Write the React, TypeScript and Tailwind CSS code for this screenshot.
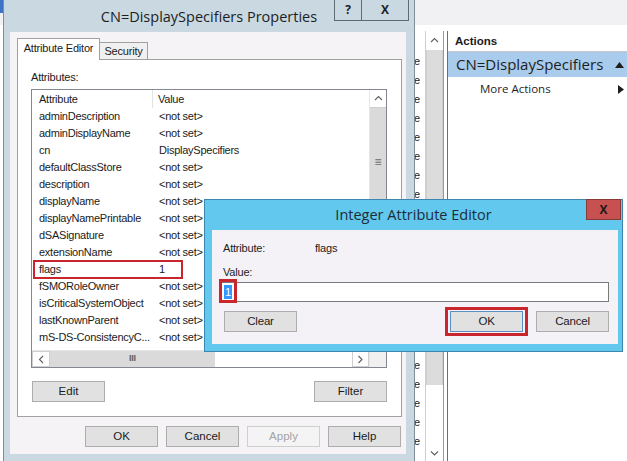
import React from "react";

type Row = [string, string];

const ROWS: Row[] = [
  ["adminDescription", "<not set>"],
  ["adminDisplayName", "<not set>"],
  ["cn", "DisplaySpecifiers"],
  ["defaultClassStore", "<not set>"],
  ["description", "<not set>"],
  ["displayName", "<not set>"],
  ["displayNamePrintable", "<not set>"],
  ["dSASignature", "<not set>"],
  ["extensionName", "<not set>"],
  ["flags", "1"],
  ["fSMORoleOwner", "<not set>"],
  ["isCriticalSystemObject", "<not set>"],
  ["lastKnownParent", "<not set>"],
  ["mS-DS-ConsistencyC...", "<not set>"],
];

// rows of the console list behind the dialogs; the ones under the editor are hidden
const CONSOLE_ROWS = Array.from({ length: 21 }, (_, i) => (i >= 8 && i <= 15 ? "" : "e"));

function Chevron({ dir }: { dir: "up" | "down" | "left" | "right" }) {
  const d = {
    up: "M1 5 L4.5 1.5 L8 5",
    down: "M1 1.5 L4.5 5 L8 1.5",
    left: "M5 1 L1.5 4.5 L5 8",
    right: "M1.5 1 L5 4.5 L1.5 8",
  }[dir];
  const vertical = dir === "up" || dir === "down";
  return (
    <svg width={vertical ? 9 : 7} height={vertical ? 7 : 9} viewBox={vertical ? "0 0 9 7" : "0 0 7 9"}>
      <path d={d} fill="none" stroke="#606060" strokeWidth="1.1" />
    </svg>
  );
}

function Btn({
  children,
  className = "",
  disabled = false,
  primary = false,
}: {
  children: React.ReactNode;
  className?: string;
  disabled?: boolean;
  primary?: boolean;
}) {
  const look = disabled
    ? "border-[#cfcfcf] bg-[#f4f4f4] text-[#a3a3a3]"
    : primary
      ? "border-[#5b8fc4] bg-[#e1e1e1] text-[#1b1b1b]"
      : "border-[#adadad] bg-[#e1e1e1] text-[#1b1b1b]";
  return (
    <div className={`flex h-[21px] w-[73px] shrink-0 items-center justify-center border text-[11.5px] ${look} ${className}`}>
      {children}
    </div>
  );
}

function Console() {
  return (
    <div className="flex h-full w-full flex-col">
      <div className="flex h-[25px] shrink-0 bg-[#f1f1f3]">
        <div className="h-[13px] w-[3px] bg-[#3d73c4]" />
      </div>
      <div className="h-[6px] shrink-0 bg-white" />
      <div className="flex min-h-0 flex-1">
        <div className="flex w-[444px] shrink-0 border-r border-[#9a9a9a]">
          <div className="flex w-[425px] flex-col overflow-hidden pt-[21px] text-[11px]">
            {CONSOLE_ROWS.map((t, i) => (
              <div key={i} className="h-[19px] shrink-0 whitespace-nowrap pl-[414px] leading-[19px]">
                {t}
              </div>
            ))}
          </div>
          <div className="flex w-[18px] flex-col border-l border-[#cfcfcf] bg-white">
            <div className="flex h-[19px] shrink-0 items-center justify-center">
              <Chevron dir="up" />
            </div>
            <div className="h-[335px] shrink-0 border-x border-[#cfcfcf] bg-[#dcdcdc]" />
            <div className="flex-1" />
            <div className="flex h-[14px] shrink-0 items-start justify-center pt-[3px]">
              <Chevron dir="down" />
            </div>
          </div>
        </div>
        <div className="w-[3px] shrink-0" />
        <div className="flex flex-1 flex-col border-l border-[#6f6f6f]">
          <div className="flex h-[21px] shrink-0 items-center border-b border-[#c8c8c8] pl-[7px] pt-[2px] text-[11.5px] font-bold text-[#1b1b1b]">
            Actions
          </div>
          <div className="flex h-[25px] shrink-0 items-center justify-between bg-[#a9cbec] pl-[8px] pr-[3px] font-['Open_Sans',sans-serif] text-[15px] text-[#1e1e1e]">
            <span>CN=DisplaySpecifiers</span>
            <svg width="9" height="6" viewBox="0 0 9 6">
              <path d="M0 6 L4.5 0 L9 6 Z" fill="#1e1e1e" />
            </svg>
          </div>
          <div className="flex h-[24px] shrink-0 items-center justify-between pl-[32px] pr-[3px] font-['Open_Sans',sans-serif] text-[11.5px] text-[#1e1e1e]">
            <span>More Actions</span>
            <svg width="6" height="9" viewBox="0 0 6 9">
              <path d="M0 0 L6 4.5 L0 9 Z" fill="#1e1e1e" />
            </svg>
          </div>
        </div>
      </div>
    </div>
  );
}

function AttributeList() {
  return (
    <div className="ml-[13px] mt-[5px] flex h-[279px] w-[356px] border border-[#828790] bg-white text-[11px] tracking-[-0.25px]">
      <div className="flex w-[337px] flex-col">
        <div className="flex h-[18px] shrink-0 items-center">
          <div className="flex h-full w-[121px] items-center border-r border-[#e3e3e3] pl-[7px]">Attribute</div>
          <div className="pl-[5px]">Value</div>
        </div>
        <div className="flex h-[242px] shrink-0 flex-col overflow-hidden">
          {ROWS.map(([name, value]) => (
            <div key={name} className="relative flex h-[17px] shrink-0 items-center whitespace-nowrap">
              <div className="w-[121px] shrink-0 pl-[7px]">{name}</div>
              <div className="pl-[6px]">{value}</div>
              {name === "flags" && (
                <div className="absolute left-[1px] top-[-1px] h-[19px] w-[150px] border-2 border-[#c8262c]" />
              )}
            </div>
          ))}
        </div>
        <div className="flex h-[17px] shrink-0 border-t border-[#e6e6e6]">
          <div className="flex w-[18px] items-center justify-center border border-[#cfcfcf] bg-white">
            <Chevron dir="left" />
          </div>
          <div className="flex w-[165px] items-center justify-center bg-[#dadada] text-[9px] font-bold text-[#606060]">
            III
          </div>
          <div className="flex-1 bg-white" />
          <div className="flex w-[17px] items-center justify-center border border-[#cfcfcf] bg-white">
            <Chevron dir="right" />
          </div>
        </div>
      </div>
      <div className="flex w-[17px] flex-col border-l border-[#e6e6e6]">
        <div className="flex h-[18px] shrink-0 items-center justify-center border-b border-[#cfcfcf]">
          <Chevron dir="up" />
        </div>
        <div className="flex h-[107px] shrink-0 items-center justify-center bg-[#dadada] text-[12px] text-[#6a6a6a]">
          ≡
        </div>
        <div className="flex-1 bg-[#f0f0f0]" />
      </div>
    </div>
  );
}

function PropertiesDialog() {
  return (
    <div className="absolute left-[3px] top-[-1px] flex h-[464px] w-[412px] flex-col border border-[#7f8e99] bg-[#c9d8e1]">
      <div className="relative flex h-[32px] shrink-0 items-center justify-center pt-[1px] font-['Open_Sans',sans-serif] text-[14.5px] text-[#1e1e1e]">
        CN=DisplaySpecifiers Properties
        <div className="absolute right-[5px] top-0 flex h-[21px] border border-t-0 border-[#5c6c78]">
          <div className="flex w-[27px] items-center justify-center border-r border-[#5c6c78] text-[12px] font-bold">?</div>
          <div className="flex w-[46px] items-center justify-center text-[12px] font-bold">X</div>
        </div>
      </div>
      <div className="ml-[6px] flex h-[422px] w-[396px] flex-col bg-[#f5f3f6]">
        <div className="ml-[7px] mt-[6px] flex h-[22px] items-end">
          <div className="relative z-10 flex h-[22px] w-[83px] items-center justify-center border border-b-0 border-[#a0a0a0] bg-white pb-[2px] text-[11px] tracking-[-0.2px]">
            Attribute Editor
          </div>
          <div className="mb-[1px] flex h-[17px] w-[48px] items-center justify-center border border-b-0 border-l-0 border-[#a0a0a0] bg-[#f0f0f0] text-[11px] tracking-[-0.2px]">
            Security
          </div>
        </div>
        <div className="-mt-[1px] ml-[7px] flex h-[358px] w-[385px] flex-col border border-[#a0a0a0] bg-white">
          <div className="pl-[13px] pt-[10px] text-[11px] leading-[14px] tracking-[-0.2px]">Attributes:</div>
          <AttributeList />
          <div className="mt-[13px] flex justify-between pl-[14px] pr-[14px]">
            <Btn>Edit</Btn>
            <Btn>Filter</Btn>
          </div>
        </div>
        <div className="mt-[9px] flex justify-end gap-[8px] pr-[5px]">
          <Btn>OK</Btn>
          <Btn>Cancel</Btn>
          <Btn disabled>Apply</Btn>
          <Btn>Help</Btn>
        </div>
      </div>
    </div>
  );
}

function IntegerEditor() {
  return (
    <div className="absolute left-[204px] top-[199px] flex h-[153px] w-[419px] flex-col border border-[#3d86ad] bg-[#62c8ee]">
      <div className="relative flex h-[30px] shrink-0 items-center justify-center font-['Open_Sans',sans-serif] text-[14.5px] text-[#1d2d38]">
        Integer Attribute Editor
        <div className="absolute right-[1px] top-[-1px] flex h-[21px] w-[35px] items-center justify-center border border-[#8a3a36] bg-[#c75050] text-[12px] font-bold text-[#1a1a1a]">
          X
        </div>
      </div>
      <div className="ml-[7px] flex h-[114px] w-[406px] flex-col bg-[#f4f2f6] text-[11px] tracking-[-0.2px]">
        <div className="flex pl-[11px] pt-[11px] leading-[14px]">
          <div className="w-[92px]">Attribute:</div>
          <div>flags</div>
        </div>
        <div className="mt-[10px] pl-[11px] leading-[14px]">Value:</div>
        <div className="relative ml-[9px] mt-[3px] flex h-[20px] w-[388px] items-center border border-[#7a7a7a] bg-white pl-[2px]">
          <span className="bg-[#3399ff] px-[1px] leading-[14px] text-white">1</span>
          <div className="absolute left-[-3px] top-[-4px] h-[24px] w-[18px] border-[3px] border-[#c8262c]" />
        </div>
        <div className="mt-[5px] flex items-center">
          <Btn className="ml-[12px]">Clear</Btn>
          <div className="ml-[148px] border-[3px] border-[#c8262c] px-[2px] py-[1px]">
            <Btn primary>OK</Btn>
          </div>
          <Btn className="ml-[8px]">Cancel</Btn>
        </div>
      </div>
    </div>
  );
}

export default function App() {
  return (
    <div className="relative h-[461px] w-[627px] overflow-hidden bg-white font-['Liberation_Sans',Arial,sans-serif] text-[11px] text-[#1b1b1b]">
      <Console />
      <PropertiesDialog />
      <IntegerEditor />
    </div>
  );
}
